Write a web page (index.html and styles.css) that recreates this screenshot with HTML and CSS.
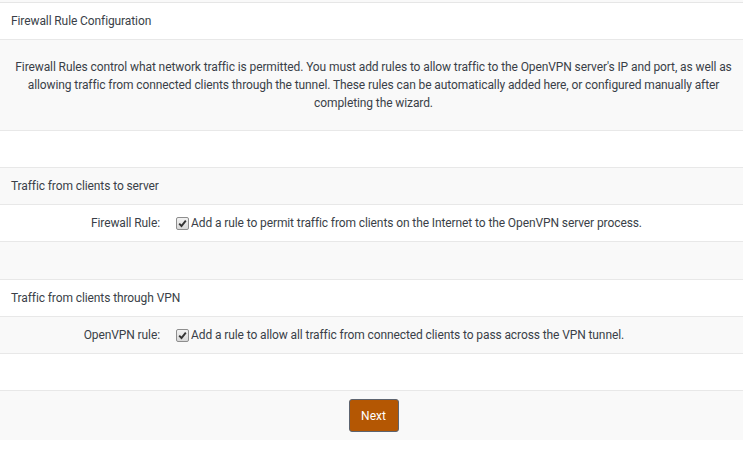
FILE: index.html
```html
<!DOCTYPE html>
<html>
<head>
<meta charset="utf-8">
<link rel="stylesheet" href="styles.css">
</head>
<body>
<div class="wizard">
  <div class="top-strip"></div>
  <div class="row odd heading">Firewall Rule Configuration</div>
  <div class="row even desc">Firewall Rules control what network traffic is permitted. You must add rules to allow traffic to the OpenVPN server's IP and port, as well as allowing traffic from connected clients through the tunnel. These rules can be automatically added here, or configured manually after completing the wizard.</div>
  <div class="row odd empty"></div>
  <div class="row even heading">Traffic from clients to server</div>
  <div class="row odd field">
    <div class="label">Firewall Rule:</div>
    <div class="control"><span class="check"><svg width="9" height="9" viewBox="0 0 9 9"><path d="M1.2 4.6 L3.5 7 L7.8 1.6" fill="none" stroke="#333" stroke-width="1.9"/></svg></span><span>Add a rule to permit traffic from clients on the Internet to the OpenVPN server process.</span></div>
  </div>
  <div class="row even empty tall"></div>
  <div class="row odd heading">Traffic from clients through VPN</div>
  <div class="row even field">
    <div class="label">OpenVPN rule:</div>
    <div class="control"><span class="check"><svg width="9" height="9" viewBox="0 0 9 9"><path d="M1.2 4.6 L3.5 7 L7.8 1.6" fill="none" stroke="#333" stroke-width="1.9"/></svg></span><span>Add a rule to allow all traffic from connected clients to pass across the VPN tunnel.</span></div>
  </div>
  <div class="row odd empty"></div>
  <div class="row even actions"><button class="next">Next</button></div>
</div>
</body>
</html>
```
FILE: styles.css
```css
html, body {
  margin: 0;
  padding: 0;
  background: #fff;
}
body {
  font-family: Roboto, "Liberation Sans", sans-serif;
  font-size: 12px;
  letter-spacing: -0.1px;
  color: #3a3f48;
}
.wizard {
  display: flex;
  flex-direction: column;
}
.top-strip {
  height: 2px;
  background: #f9f9f9;
  border-bottom: 1px solid #e6e6e6;
}
.row {
  border-bottom: 1px solid #e8e8e8;
  box-sizing: border-box;
}
.odd { background: #fff; }
.even { background: #f9f9f9; }
.heading {
  height: 37px;
  padding: 0 11px;
  display: flex;
  align-items: center;
}
.empty { height: 37px; }
.tall { height: 38px; }
.desc {
  padding: 18px 4px 18px 8px;
  text-align: center;
  line-height: 18px;
  height: 91px;
}
.field {
  height: 37px;
  display: flex;
  align-items: center;
}
.label {
  width: 160px;
  text-align: right;
  flex: none;
}
.control {
  margin-left: 16px;
  display: flex;
  align-items: center;
}
.check {
  width: 11px;
  height: 11px;
  border: 1px solid #8e8e8e;
  border-radius: 2px;
  background: linear-gradient(#f2f2f2, #d8d8d8);
  display: flex;
  align-items: center;
  justify-content: center;
  margin-right: 2px;
}
.actions {
  height: 49px;
  padding-top: 8px;
  display: flex;
  justify-content: center;
  align-items: flex-start;
  border-bottom: none;
}
.next {
  width: 50px;
  height: 33px;
  margin-left: 4px;
  background: #b45703;
  border: 1px solid #5d6470;
  border-radius: 3px;
  color: #fff;
  font-family: inherit;
  font-size: 12px;
  letter-spacing: 0;
  padding: 0;
}
```
